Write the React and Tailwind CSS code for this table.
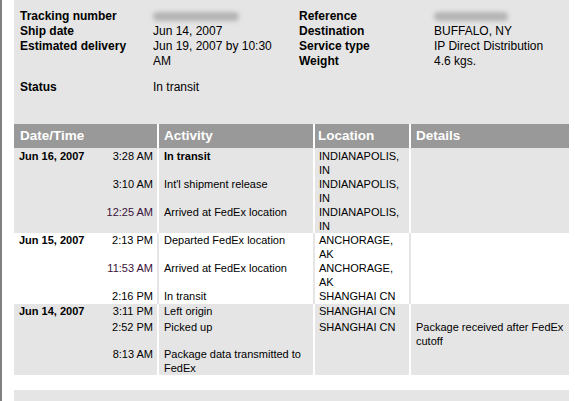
import React from 'react';

const summaryLeft = [
  { label: 'Tracking number', blur: true },
  { label: 'Ship date', value: 'Jun 14, 2007' },
  { label: 'Estimated delivery', value: 'Jun 19, 2007 by 10:30 AM' },
];

const summaryRight = [
  { label: 'Reference', blur: true },
  { label: 'Destination', value: 'BUFFALO, NY' },
  { label: 'Service type', value: 'IP Direct Distribution' },
  { label: 'Weight', value: '4.6 kgs.' },
];

const groups = [
  {
    date: 'Jun 16, 2007',
    shade: 'gray',
    rows: [
      { time: '3:28 AM', activity: 'In transit', bold: true, location: 'INDIANAPOLIS, IN', h: 'h-[28px]' },
      { time: '3:10 AM', activity: "Int'l shipment release", location: 'INDIANAPOLIS, IN', h: 'h-[28px]' },
      { time: '12:25 AM', activity: 'Arrived at FedEx location', location: 'INDIANAPOLIS, IN', h: 'h-[28px]', tint: true },
    ],
  },
  {
    date: 'Jun 15, 2007',
    shade: 'white',
    rows: [
      { time: '2:13 PM', activity: 'Departed FedEx location', location: 'ANCHORAGE, AK', h: 'h-[28px]' },
      { time: '11:53 AM', activity: 'Arrived at FedEx location', location: 'ANCHORAGE, AK', h: 'h-[28px]', tint: true },
      { time: '2:16 PM', activity: 'In transit', location: 'SHANGHAI CN', h: 'h-[15px]' },
    ],
  },
  {
    date: 'Jun 14, 2007',
    shade: 'gray',
    rows: [
      { time: '3:11 PM', activity: 'Left origin', location: 'SHANGHAI CN', h: 'h-[16px]' },
      { time: '2:52 PM', activity: 'Picked up', location: 'SHANGHAI CN', details: 'Package received after FedEx cutoff', h: 'h-[27px]' },
      { time: '8:13 AM', activity: 'Package data transmitted to FedEx', location: '', h: 'h-[28px]' },
    ],
  },
];

const Blurred = ({ w }) => (
  <div className="h-[15px] flex items-center">
    <div className={`${w} h-[9px] rounded-full bg-[#b4b4b4] blur-[2px]`} />
  </div>
);

const TrackingRow = ({ row, date, first, shade }) => {
  const cell = shade === 'gray' ? 'bg-[#e5e5e5]' : 'bg-white';
  const gap = shade === 'gray' ? 'bg-white' : 'bg-[#e5e5e5]';
  return (
    <div className={`grid grid-cols-[143px_154px_94px_158px] gap-x-[2px] ${gap} ${row.h}`}>
      <div className={`${cell} flex justify-between pl-[5px] pr-[4px]`}>
        <span className="font-bold">{first ? date : ''}</span>
        <span className={row.tint ? 'text-[#3a1038]' : ''}>{row.time}</span>
      </div>
      <div className={`${cell} pl-[5px] pr-[2px] ${row.bold ? 'font-bold' : ''}`}>{row.activity}</div>
      <div className={`${cell} pl-[4px] pr-[4px]`}>{row.location}</div>
      <div className={`${cell} pl-[5px] pr-[2px]`}>{row.details}</div>
    </div>
  );
};

export default function App() {
  return (
    <div className="w-[575px] h-[401px] bg-white overflow-hidden flex font-['Liberation_Sans',Arial,sans-serif] text-black">
      <div className="w-[2px] shrink-0 bg-[#808080]" />
      <div className="w-[555px] ml-[12px] shrink-0 flex flex-col">
        {/* Summary */}
        <div className="h-[124px] bg-[#e5e5e5] flex pt-[9px] pl-[6px] text-[12px] leading-[15px]">
          <div className="w-[279px] shrink-0 grid grid-cols-[133px_146px] content-start">
            {summaryLeft.map((r) => (
              <React.Fragment key={r.label}>
                <div className="font-bold">{r.label}</div>
                {r.blur ? <Blurred w="w-[86px]" /> : <div className="pr-[10px]">{r.value}</div>}
              </React.Fragment>
            ))}
            <div className="font-bold mt-[11px]">Status</div>
            <div className="mt-[11px]">In transit</div>
          </div>
          <div className="flex-1 grid grid-cols-[135px_1fr] content-start">
            {summaryRight.map((r) => (
              <React.Fragment key={r.label}>
                <div className="font-bold">{r.label}</div>
                {r.blur ? <Blurred w="w-[74px]" /> : <div>{r.value}</div>}
              </React.Fragment>
            ))}
          </div>
        </div>

        {/* Header */}
        <div className="grid grid-cols-[143px_154px_94px_158px] gap-x-[2px] bg-white h-[24px] text-white font-bold text-[13.5px]">
          <div className="bg-[#999999] pl-[6px] flex items-center">Date/Time</div>
          <div className="bg-[#999999] pl-[5px] flex items-center">Activity</div>
          <div className="bg-[#999999] pl-[3px] flex items-center">Location</div>
          <div className="bg-[#999999] pl-[5px] flex items-center">Details</div>
        </div>

        {/* Activity rows */}
        <div className="text-[11px] leading-[14px]">
          {groups.map((g, gi) => (
            <div key={g.date} className={gi === 0 ? 'pt-[1px] bg-[#e5e5e5]' : ''}>
              {g.rows.map((row, i) => (
                <TrackingRow key={row.time} row={row} date={g.date} first={i === 0} shade={g.shade} />
              ))}
            </div>
          ))}
        </div>

        <div className="h-[15px]" />
        <div className="flex-1 bg-[#e5e5e5]" />
      </div>
    </div>
  );
}
